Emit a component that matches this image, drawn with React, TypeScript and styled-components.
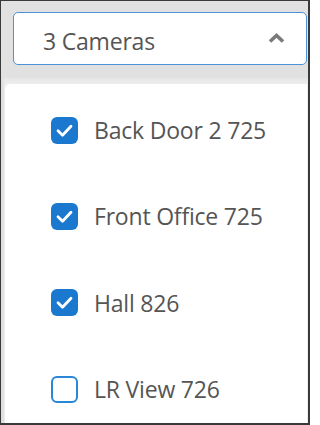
import React from "react";
import styled, { createGlobalStyle } from "styled-components";

const Global = createGlobalStyle`
  html, body { margin: 0; padding: 0; background: #ffffff; }
  body { font-family: "Open Sans", "Noto Sans", sans-serif; }
  * { box-sizing: border-box; }
`;

const Frame = styled.div`
  width: 310px;
  height: 425px;
  border-style: solid;
  border-color: #3a3a3a;
  border-width: 1px 2px 2px 1px;
  overflow: hidden;
  display: flex;
  flex-direction: column;
  background: #e2e2e2;
`;

const Header = styled.div`
  flex: none;
  height: 77px;
  padding: 11px 1px 0 12px;
  background: #e1e1e1;
`;

const SelectBox = styled.div`
  height: 53px;
  border: 1.5px solid #4c93d8;
  border-radius: 5px;
  background: #ffffff;
  display: flex;
  align-items: center;
  justify-content: space-between;
  padding: 4px 21px 0 29px;
`;

const SelectLabel = styled.span`
  font-family: "Open Sans", "Noto Sans", sans-serif;
  font-size: 23px;
  color: #555555;
  letter-spacing: -0.2px;
`;

const Chevron = styled.svg`
  width: 17px;
  height: 10px;
  margin-top: -6px;
`;

const Body = styled.div`
  flex: 1;
  display: flex;
  flex-direction: column;
  padding: 6px 1px 0 4px;
  background:
    linear-gradient(to right, #cfcfcf 0px, #ececec 1px, #d6d6d6 2px, #efefef 3px, #e6e6e6 4px, transparent 4px),
    linear-gradient(#e6e6e6, #ededed 6px, #ececec);
`;

const Panel = styled.div`
  flex: 1;
  background: #ffffff;
  border-top-left-radius: 5px;
  display: flex;
  flex-direction: column;
  padding-top: 3px;
`;

const Row = styled.label`
  flex: none;
  height: 86.3px;
  display: flex;
  align-items: center;
  gap: 16px;
  padding-left: 46px;
`;

const Box = styled.span<{ $checked: boolean }>`
  flex: none;
  width: 27px;
  height: 27px;
  border-radius: 6px;
  display: flex;
  align-items: center;
  justify-content: center;
  background: ${(p) => (p.$checked ? "#1b78cf" : "#ffffff")};
  border: ${(p) => (p.$checked ? "none" : "2.5px solid #2a86d6")};
`;

const Check = styled.svg`
  width: 27px;
  height: 27px;
`;

const RowLabel = styled.span`
  font-family: "Open Sans", "Noto Sans", sans-serif;
  font-size: 23px;
  color: #555555;
  letter-spacing: -0.2px;
`;

const cameras = [
  { name: "Back Door 2 725", checked: true },
  { name: "Front Office 725", checked: true },
  { name: "Hall 826", checked: true },
  { name: "LR View 726", checked: false },
];

export default function App() {
  return (
    <>
      <Global />
      <Frame>
        <Header>
          <SelectBox>
            <SelectLabel>3 Cameras</SelectLabel>
            <Chevron viewBox="0 0 17 10">
              <polyline
                points="2,8.5 8.5,2.5 15,8.5"
                fill="none"
                stroke="#7a7a7a"
                strokeWidth="3.6"
                strokeLinejoin="miter"
              />
            </Chevron>
          </SelectBox>
        </Header>
        <Body>
          <Panel>
            {cameras.map((c) => (
              <Row key={c.name}>
                <Box $checked={c.checked}>
                  {c.checked && (
                    <Check viewBox="0 0 27 27">
                      <polyline
                        points="7,13.8 11.5,18.3 20,9.3"
                        fill="none"
                        stroke="#ffffff"
                        strokeWidth="2.8"
                        strokeLinecap="round"
                        strokeLinejoin="round"
                      />
                    </Check>
                  )}
                </Box>
                <RowLabel>{c.name}</RowLabel>
              </Row>
            ))}
          </Panel>
        </Body>
      </Frame>
    </>
  );
}
